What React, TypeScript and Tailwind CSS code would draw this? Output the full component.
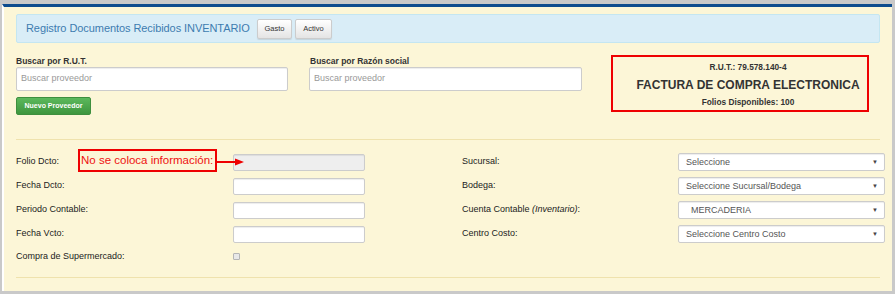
import React from 'react'

const font = { fontFamily: '"Liberation Sans", Arial, sans-serif' }

function Select({ text, indent }: { text: string; indent?: boolean }) {
  return (
    <div className="shrink-0 w-[207px] h-[18px] bg-white border border-[#cccccc] rounded-[2px] shadow-[inset_0_1px_1px_rgba(0,0,0,0.075)] flex items-center justify-between pr-[6px]">
      <span className={`text-[9px] text-[#555555] ${indent ? 'pl-[12px]' : 'pl-[7px]'}`}>{text}</span>
      <span className="text-[6px] text-[#444444] leading-none">▼</span>
    </div>
  )
}

function TextInput({ disabled }: { disabled?: boolean }) {
  return (
    <div
      className={`shrink-0 w-[132px] h-[17px] border border-[#cccccc] rounded-[2px] shadow-[inset_0_1px_1px_rgba(0,0,0,0.075)] ${disabled ? 'bg-[#eeeeee]' : 'bg-white'}`}
    />
  )
}

function Row({ label, right, select, children }: { label: string; right: React.ReactNode; select: React.ReactNode; children?: React.ReactNode }) {
  return (
    <div className="relative flex items-center h-[18px]">
      <span className="shrink-0 w-[217px] text-[9px] text-[#222222] pb-[2px]">{label}</span>
      {children}
      <div className="shrink-0 w-[97px]" />
      <span className="shrink-0 w-[216px] text-[9px] text-[#222222] pb-[2px]">{right}</span>
      {select}
    </div>
  )
}

export default function App() {
  return (
    <div style={font} className="w-[895px] h-[294px] bg-[#c9c9c9] pt-[4px] pl-[2px] pr-[3px] pb-[3px] flex flex-col overflow-hidden">
      <div className="flex-1 border-t-[3px] border-t-[#0d4c8e] border-l-[2px] border-l-white bg-[#fcf6d7] pt-[7px] pl-[12px] pr-[12px] overflow-hidden">
        {/* Cabecera */}
        <div className="h-[29px] bg-[#d9edf7] border border-[#c4e6f1] rounded-[2px] flex items-center pl-[9px]">
          <span className="shrink-0 w-[228px] whitespace-nowrap text-[11px] tracking-[-0.07px] text-[#3d7cb0]">Registro Documentos Recibidos INVENTARIO</span>
          <button className="ml-[3px] w-[35px] h-[20px] bg-gradient-to-b from-white to-[#e4e4e4] border border-[#cccccc] rounded-[2px] text-[7.5px] text-[#333333] shadow-[0_1px_1px_rgba(0,0,0,0.1)]">Gasto</button>
          <button className="ml-[3px] w-[37px] h-[20px] bg-gradient-to-b from-white to-[#e4e4e4] border border-[#cccccc] rounded-[2px] text-[7.5px] text-[#333333] shadow-[0_1px_1px_rgba(0,0,0,0.1)]">Activo</button>
        </div>

        {/* Búsqueda */}
        <div className="mt-[12px] flex">
          <div className="shrink-0 w-[272px]">
            <p className="h-[12px] text-[8.5px] font-bold text-[#333333] leading-[12px]">Buscar por R.U.T.</p>
            <div className="h-[24px] bg-white border border-[#cccccc] rounded-[2px] shadow-[inset_0_1px_1px_rgba(0,0,0,0.075)] flex items-center pl-[4px] text-[9px] text-[#999999]">Buscar proveedor</div>
            <button className="mt-[6px] w-[75px] h-[18px] rounded-[2px] bg-gradient-to-b from-[#5cb85c] to-[#3e963e] border border-[#3e8f3e] text-white text-[7px] font-bold">Nuevo Proveedor</button>
          </div>
          <div className="shrink-0 ml-[21px] w-[273px]">
            <p className="h-[12px] text-[8.5px] font-bold text-[#333333] leading-[12px] pl-[1px]">Buscar por Razón social</p>
            <div className="h-[24px] bg-white border border-[#cccccc] rounded-[2px] shadow-[inset_0_1px_1px_rgba(0,0,0,0.075)] flex items-center pl-[4px] text-[9px] text-[#999999]">Buscar proveedor</div>
          </div>
          <div className="shrink-0 ml-[29px] w-[258px] h-[57px] border-2 border-[#ee0000] flex flex-col items-center pl-[16px] pt-[5px] text-[#333333]">
            <p className="text-[8.3px] font-bold leading-[11px]">R.U.T.: 79.578.140-4</p>
            <p className="mt-[5px] text-[12px] font-bold leading-[14px]">FACTURA DE COMPRA ELECTRONICA</p>
            <p className="mt-[5px] text-[8.3px] font-bold leading-[11px]">Folios Disponibles: 100</p>
          </div>
        </div>

        <div className="mt-[24px] h-px bg-[#efe2ad]" />

        {/* Formulario */}
        <div className="mt-[13px] flex flex-col gap-[6px]">
          <Row label="Folio Dcto:" right="Sucursal:" select={<Select text="Seleccione" />}>
            <TextInput disabled />
            <div className="absolute left-[62px] top-[-4px] w-[139px] h-[23px] border-2 border-[#ee0000] flex items-center pl-[1px]">
              <span className="text-[11.5px] text-[#ee1111] leading-none">No se coloca información:</span>
            </div>
            <svg className="absolute left-[200px] top-[5px]" width="29" height="8" viewBox="0 0 29 8">
              <line x1="0" y1="4" x2="21" y2="4" stroke="#ee0000" strokeWidth="2" />
              <polygon points="19,0.5 28,4 19,7.5" fill="#ee0000" />
            </svg>
          </Row>
          <Row label="Fecha Dcto:" right="Bodega:" select={<Select text="Seleccione Sucursal/Bodega" />}>
            <TextInput />
          </Row>
          <Row
            label="Periodo Contable:"
            right={<>Cuenta Contable <i>(Inventario)</i>:</>}
            select={<Select text="MERCADERIA" indent />}
          >
            <TextInput />
          </Row>
          <Row label="Fecha Vcto:" right="Centro Costo:" select={<Select text="Seleccione Centro Costo" />}>
            <TextInput />
          </Row>
          <div className="flex items-center h-[14px]">
            <span className="shrink-0 w-[217px] text-[9px] text-[#222222]">Compra de Supermercado:</span>
            <div className="shrink-0 w-[7px] h-[7px] border border-[#b5b5b5] bg-[#e8e8e8] rounded-[1px]" />
          </div>
        </div>

        <div className="mt-[14px] h-px bg-[#efe2ad]" />
      </div>
    </div>
  )
}
